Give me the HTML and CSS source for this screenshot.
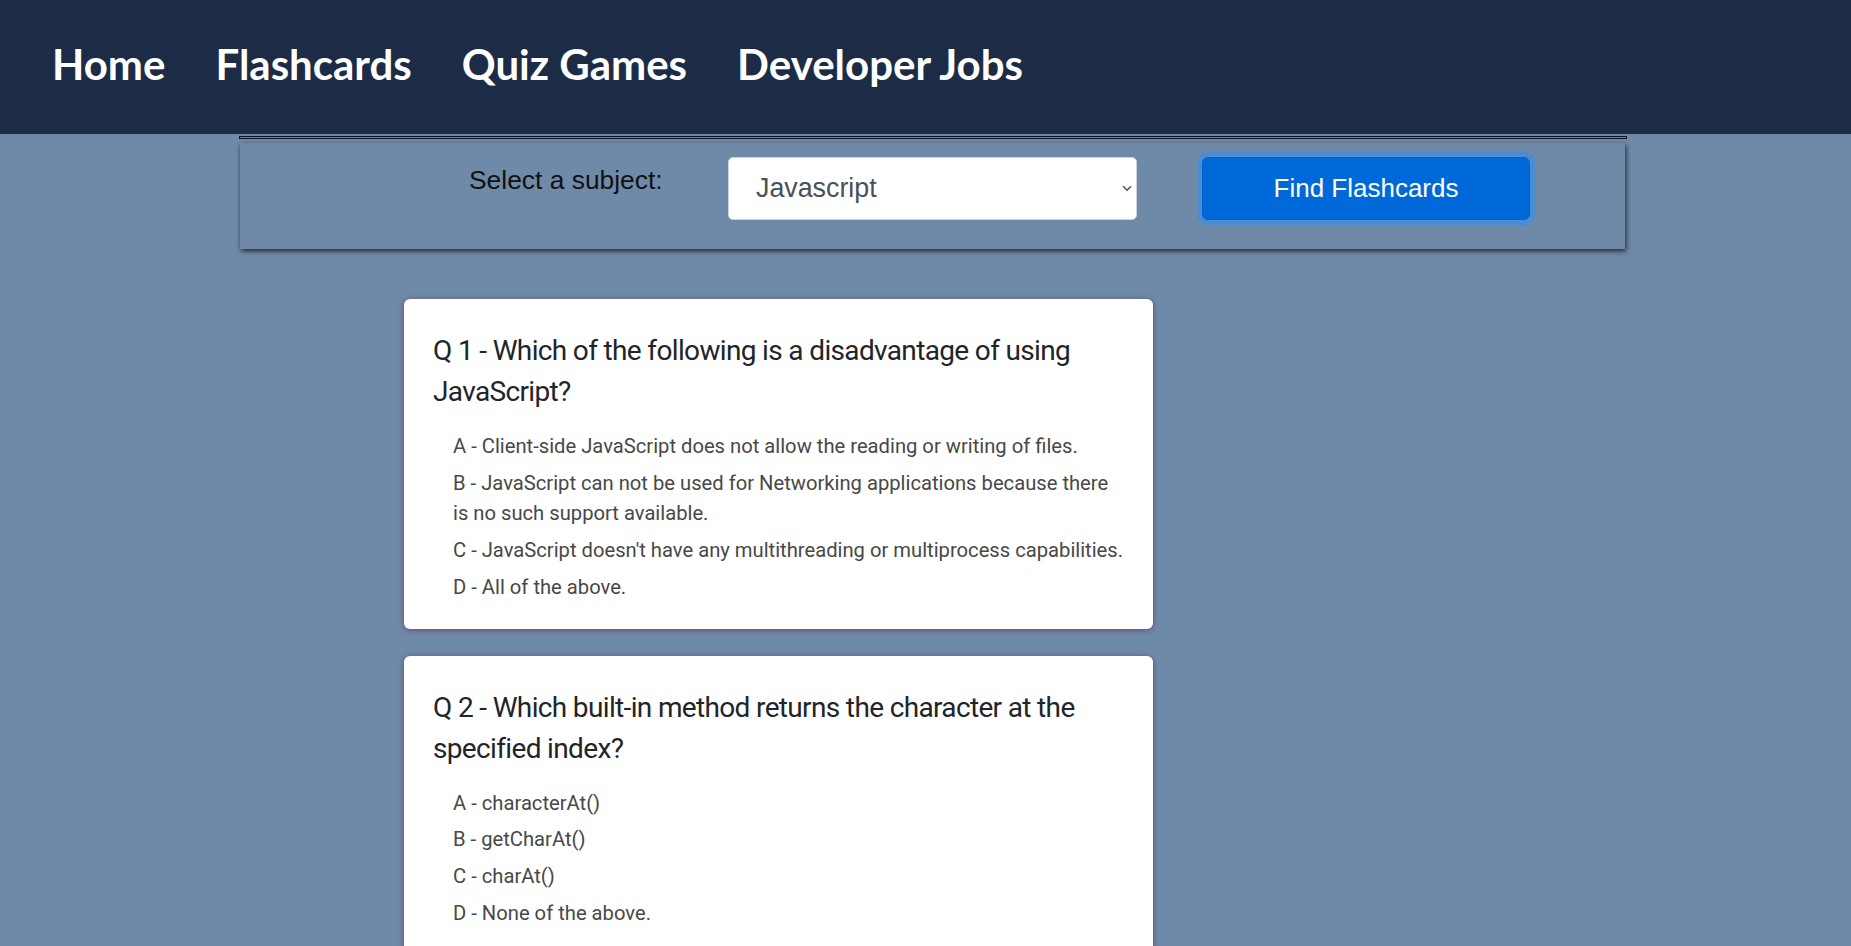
FILE: index.html
```html
<!DOCTYPE html>
<html lang="en">
<head>
<meta charset="utf-8">
<title>Flashcards</title>
<link rel="stylesheet" href="styles.css">
</head>
<body>
<nav class="topnav">
  <a class="nav-link" href="#">Home</a>
  <a class="nav-link" href="#">Flashcards</a>
  <a class="nav-link" href="#">Quiz Games</a>
  <a class="nav-link" href="#">Developer Jobs</a>
</nav>
<div class="rule"></div>
<section class="finder">
  <label class="finder-label">Select a subject:</label>
  <div class="select-box">
    <span class="select-value">Javascript</span>
    <svg class="chevron" width="10" height="7" viewBox="0 0 10 7"><path d="M1 1.2 L5 5.2 L9 1.2" fill="none" stroke="#555" stroke-width="1.6"/></svg>
  </div>
  <button class="find-btn">Find Flashcards</button>
</section>
<main class="cards">
  <article class="card">
    <h2 class="card-title">Q 1 - Which of the following is a disadvantage of using JavaScript?</h2>
    <ul class="options">
      <li>A - Client-side JavaScript does not allow the reading or writing of files.</li>
      <li>B - JavaScript can not be used for Networking applications because there is no such support available.</li>
      <li>C - JavaScript doesn't have any multithreading or multiprocess capabilities.</li>
      <li>D - All of the above.</li>
    </ul>
  </article>
  <article class="card">
    <h2 class="card-title">Q 2 - Which built-in method returns the character at the specified index?</h2>
    <ul class="options">
      <li>A - characterAt()</li>
      <li>B - getCharAt()</li>
      <li>C - charAt()</li>
      <li>D - None of the above.</li>
    </ul>
  </article>
</main>
</body>
</html>
```
FILE: styles.css
```css
html, body {
  margin: 0;
  padding: 0;
}
body {
  background: #6f8aa9;
  font-family: "Liberation Sans", Arial, sans-serif;
}
.topnav {
  height: 134px;
  box-sizing: border-box;
  background: #1c2c47;
  display: flex;
  align-items: center;
  padding: 0 0 6px 52px;
  gap: 50px;
}
.nav-link {
  font-family: Lato, "DejaVu Sans", sans-serif;
  font-weight: 700;
  font-size: 42px;
  color: #ffffff;
  text-decoration: none;
}
.rule {
  margin: 2px 0 0 239px;
  width: 1386px;
  height: 1px;
  border: 1px solid #0d1624;
  background: #6a83a1;
}
.finder {
  margin: 4px 226px 0 240px;
  height: 106px;
  box-sizing: border-box;
  padding: 14px 0 0 229px;
  display: flex;
  align-items: flex-start;
  box-shadow: 1px 2px 5px rgba(0, 0, 0, 0.75);
}
.finder-label {
  flex: none;
  width: 194px;
  margin-top: 8px;
  font-size: 26.4px;
  color: #111;
  line-height: 30px;
  white-space: nowrap;
}
.select-box {
  flex: none;
  margin-left: 65px;
  width: 409px;
  height: 63px;
  box-sizing: border-box;
  background: #fff;
  border: 1px solid #ced4da;
  border-radius: 5px;
  padding: 0 4px 0 27px;
  display: flex;
  align-items: center;
  justify-content: space-between;
}
.select-value {
  font-size: 26.8px;
  color: #495057;
}
.find-btn {
  flex: none;
  margin-left: 65px;
  width: 328px;
  height: 63px;
  background: #0069d9;
  border: 1px solid #0062cc;
  border-radius: 6px;
  color: #fff;
  font-family: "Liberation Sans", Arial, sans-serif;
  font-size: 26px;
  box-shadow: 0 0 0 5px rgba(38, 143, 255, 0.5);
  padding: 0;
}
.cards {
  padding: 50px 0 0 404px;
}
.card {
  width: 749px;
  box-sizing: border-box;
  background: #fff;
  border-radius: 6px;
  padding: 31px 28px 26px 29px;
  margin-bottom: 27px;
  box-shadow: 0 1px 6px rgba(100, 40, 80, 0.65);
}
.card-title {
  margin: 0 0 19px;
  font-family: Roboto, "Liberation Sans", sans-serif;
  font-weight: 400;
  font-size: 28px;
  line-height: 41px;
  letter-spacing: -0.65px;
  color: #212529;
}
.options {
  list-style: none;
  margin: 0;
  padding: 0 0 0 20px;
}
.options li {
  margin-top: 6px;
  font-family: Roboto, "Liberation Sans", sans-serif;
  font-size: 20.2px;
  line-height: 30.7px;
  color: #484848;
}
```
